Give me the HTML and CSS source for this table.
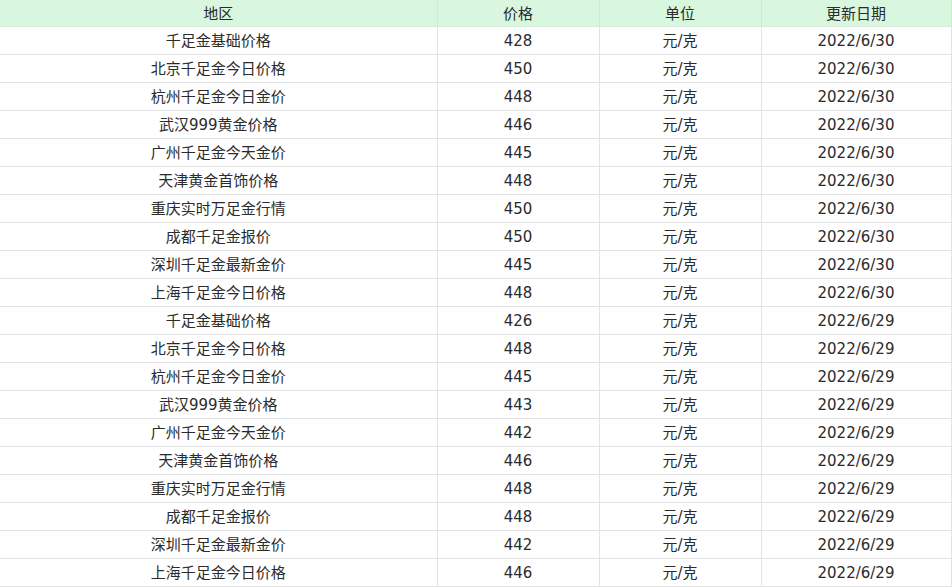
FILE: index.html
```html
<!DOCTYPE html>
<html lang="zh-CN">
<head>
<meta charset="utf-8">
<link rel="stylesheet" href="styles.css">
</head>
<body>
<table class="price-table">
  <colgroup>
    <col class="c-area"><col class="c-price"><col class="c-unit"><col class="c-date">
  </colgroup>
  <thead>
    <tr><th>地区</th><th>价格</th><th>单位</th><th>更新日期</th></tr>
  </thead>
  <tbody>
    <tr><td>千足金基础价格</td><td>428</td><td>元/克</td><td>2022/6/30</td></tr>
    <tr><td>北京千足金今日价格</td><td>450</td><td>元/克</td><td>2022/6/30</td></tr>
    <tr><td>杭州千足金今日金价</td><td>448</td><td>元/克</td><td>2022/6/30</td></tr>
    <tr><td>武汉999黄金价格</td><td>446</td><td>元/克</td><td>2022/6/30</td></tr>
    <tr><td>广州千足金今天金价</td><td>445</td><td>元/克</td><td>2022/6/30</td></tr>
    <tr><td>天津黄金首饰价格</td><td>448</td><td>元/克</td><td>2022/6/30</td></tr>
    <tr><td>重庆实时万足金行情</td><td>450</td><td>元/克</td><td>2022/6/30</td></tr>
    <tr><td>成都千足金报价</td><td>450</td><td>元/克</td><td>2022/6/30</td></tr>
    <tr><td>深圳千足金最新金价</td><td>445</td><td>元/克</td><td>2022/6/30</td></tr>
    <tr><td>上海千足金今日价格</td><td>448</td><td>元/克</td><td>2022/6/30</td></tr>
    <tr><td>千足金基础价格</td><td>426</td><td>元/克</td><td>2022/6/29</td></tr>
    <tr><td>北京千足金今日价格</td><td>448</td><td>元/克</td><td>2022/6/29</td></tr>
    <tr><td>杭州千足金今日金价</td><td>445</td><td>元/克</td><td>2022/6/29</td></tr>
    <tr><td>武汉999黄金价格</td><td>443</td><td>元/克</td><td>2022/6/29</td></tr>
    <tr><td>广州千足金今天金价</td><td>442</td><td>元/克</td><td>2022/6/29</td></tr>
    <tr><td>天津黄金首饰价格</td><td>446</td><td>元/克</td><td>2022/6/29</td></tr>
    <tr><td>重庆实时万足金行情</td><td>448</td><td>元/克</td><td>2022/6/29</td></tr>
    <tr><td>成都千足金报价</td><td>448</td><td>元/克</td><td>2022/6/29</td></tr>
    <tr><td>深圳千足金最新金价</td><td>442</td><td>元/克</td><td>2022/6/29</td></tr>
    <tr><td>上海千足金今日价格</td><td>446</td><td>元/克</td><td>2022/6/29</td></tr>
  </tbody>
</table>
</body>
</html>
```
FILE: styles.css
```css
html, body {
  margin: 0;
  padding: 0;
  background: #ffffff;
}
body {
  font-family: "DejaVu Sans", "Noto Sans CJK SC", sans-serif;
  font-size: 15px;
  color: #2b2b2b;
}
.price-table {
  width: 951px;
  border-collapse: collapse;
  table-layout: fixed;
}
.c-area { width: 437px; }
.c-price { width: 162px; }
.c-unit { width: 162px; }
.c-date { width: 190px; }
.price-table th,
.price-table td {
  height: 27px;
  padding: 0;
  text-align: center;
  vertical-align: middle;
  border: 1px solid #e3e3e3;
  font-weight: normal;
  line-height: 20px;
  white-space: nowrap;
}
.price-table th {
  height: 25px;
  padding-top: 1px;
  background: #d9f7df;
  border-top: none;
  border-left-color: #c9efd2;
  border-right-color: #c9efd2;
  border-bottom-color: #d4ecd9;
}
.price-table tr > :first-child { border-left: none; }
```
